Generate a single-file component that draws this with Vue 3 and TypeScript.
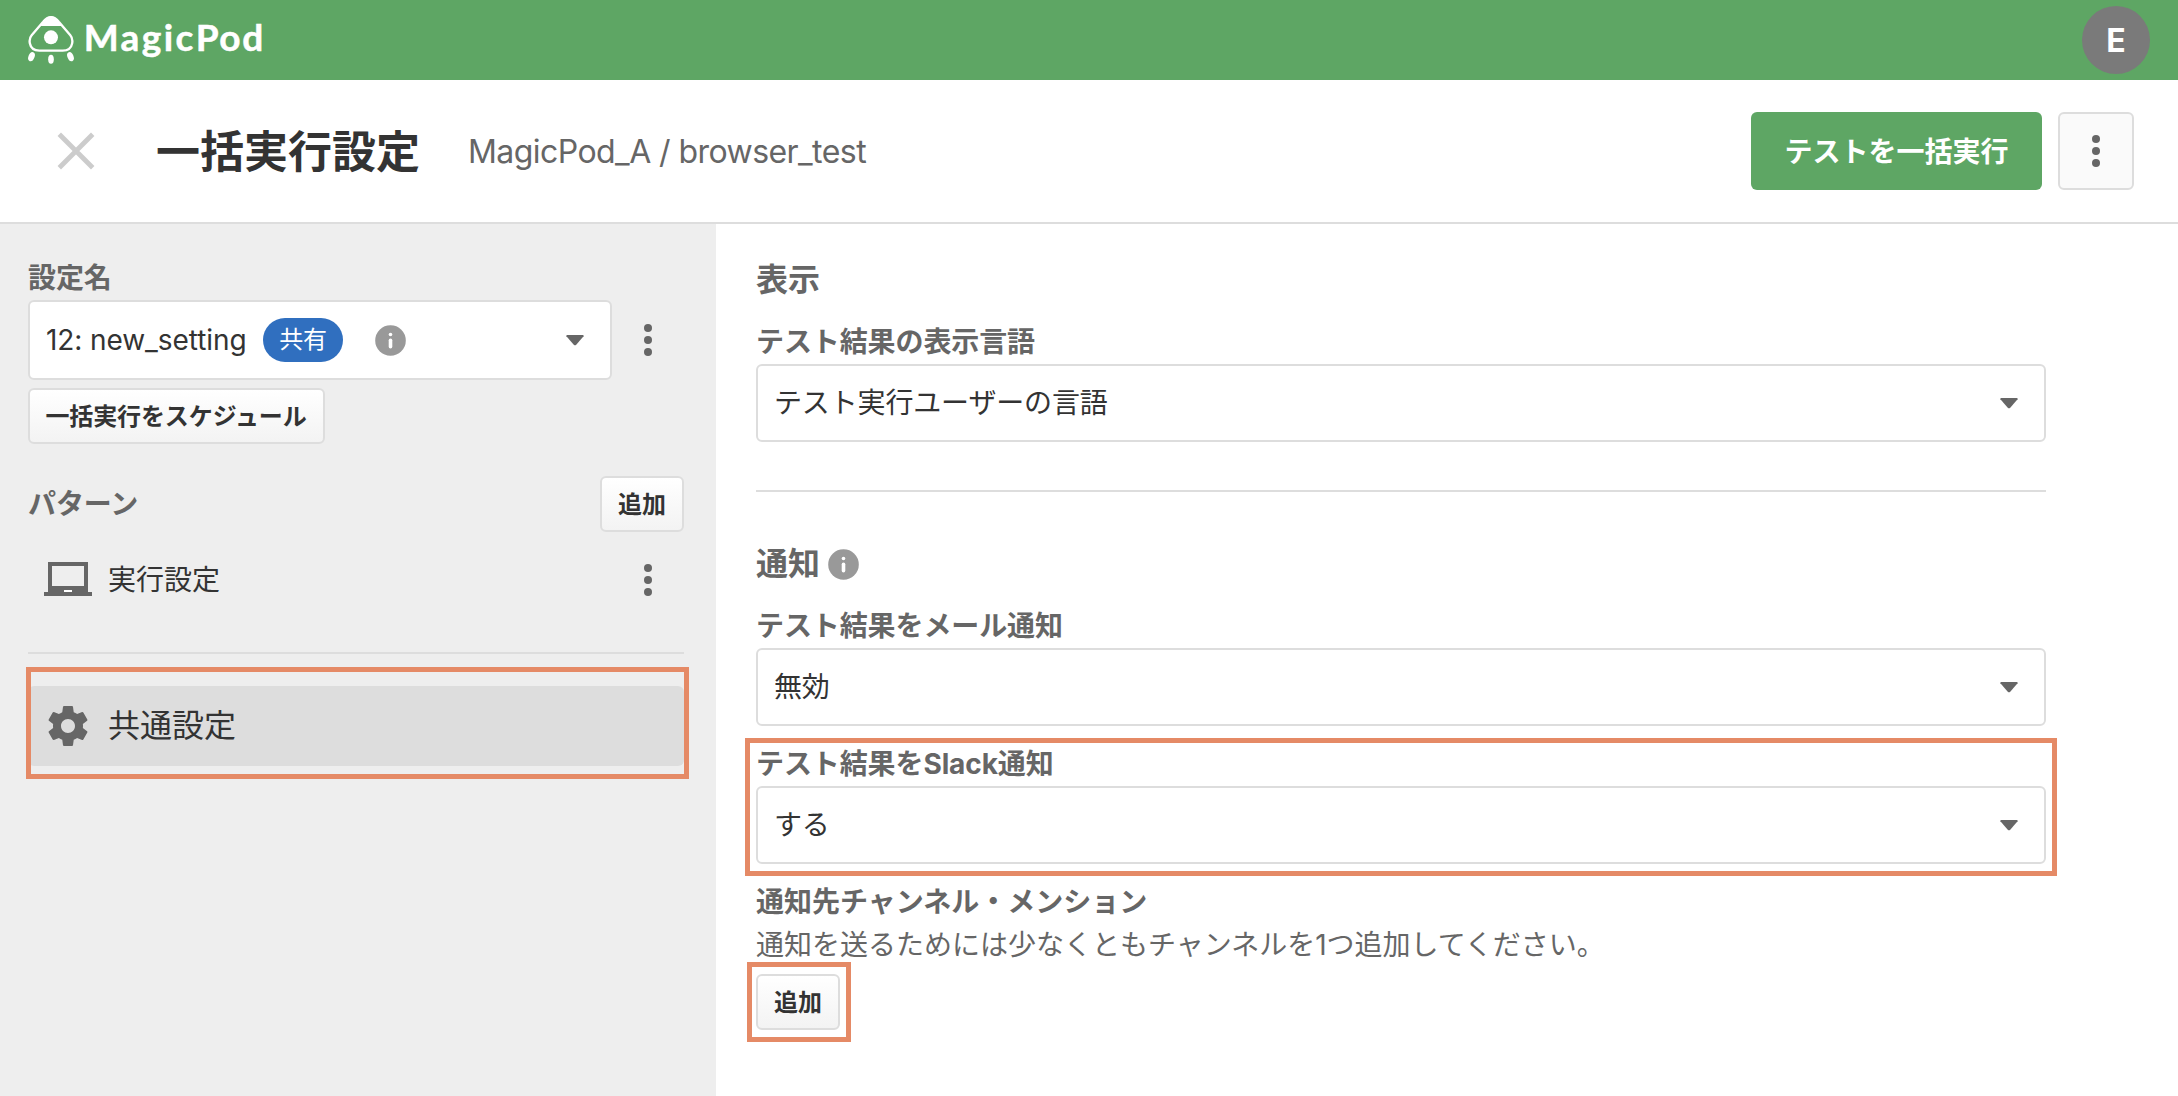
<script setup lang="ts">
import { ref } from 'vue'

interface SelectField {
  id: string
  label: string
  value: string
}

const language = ref<SelectField>({ id: 'language', label: 'テスト結果の表示言語', value: 'テスト実行ユーザーの言語' })
const notifications = ref<SelectField[]>([
  { id: 'mail', label: 'テスト結果をメール通知', value: '無効' },
  { id: 'slack', label: 'テスト結果をSlack通知', value: 'する' },
])
</script>

<template>
  <div class="page">
    <header class="topbar">
      <div class="brand">
        <svg class="logo" viewBox="84 45 140 150">
          <path
            d="M153 51.5C143 51.5 136 57 129 66L95 106C88 114 88 122 89.500 130C92 144 103 151.500 118 152H188C203 151.500 214 144 216.500 130C218 122 218 114 211 106L177 66C170 57 163 51.500 153 51.500Z"
            fill="none" stroke="#fff" stroke-width="7" />
          <path d="M122 78C134 62 140 49 153 49C166 49 173 62 186 78Z" fill="#fff" />
          <circle cx="153" cy="112" r="21" fill="#fff" />
          <ellipse cx="94.500" cy="170" rx="9" ry="14.500" transform="rotate(22 94.500 170)" fill="#fff" />
          <ellipse cx="153" cy="177.500" rx="8.500" ry="13.500" fill="#fff" />
          <ellipse cx="211.500" cy="170" rx="9" ry="14.500" transform="rotate(-22 211.500 170)" fill="#fff" />
        </svg>
        <div class="wordmark"><span class="magic">Magic</span><span>Pod</span></div>
      </div>
      <div class="avatar">E</div>
    </header>

    <div class="titlebar">
      <svg class="close" viewBox="0 0 40 40">
        <path d="M3.300 3.300L36.700 36.700M36.700 3.300L3.300 36.700" stroke="#ccc" stroke-width="4.800" />
      </svg>
      <h1>一括実行設定</h1>
      <div class="crumb">MagicPod_A / browser_test</div>
      <button class="run">テストを一括実行</button>
      <button class="more"><span class="dots"><i /><i /><i /></span></button>
    </div>

    <div class="body">
      <aside class="side">
        <div class="label">設定名</div>
        <div class="setting-row">
          <div class="select setting">
            <span class="setting-name">12: new_setting</span>
            <span class="badge">共有</span>
            <svg class="info" viewBox="0 0 31 31">
              <circle cx="15.500" cy="15.500" r="15.300" />
              <circle cx="15.500" cy="9.500" r="1.800" fill="#fff" />
              <rect x="13.700" y="13.500" width="3.600" height="10" rx="1.800" fill="#fff" />
            </svg>
            <svg class="caret" viewBox="0 0 18 11"><path d="M1 0H17Q18 .3 17.600 1.200L10 9.900Q9 10.800 8 9.900L.4 1.200Q0 .3 1 0Z" /></svg>
          </div>
          <span class="dots"><i /><i /><i /></span>
        </div>
        <button class="btn schedule">一括実行をスケジュール</button>

        <div class="pattern-head">
          <div class="label">パターン</div>
          <button class="btn">追加</button>
        </div>
        <div class="item pattern">
          <svg class="item-icon" viewBox="0 0 24 24"><path d="M22 18V3H2v15H0v2h24v-2h-2zm-8 0h-4v-1h4v1zm6-3H4V5h16v10z" /><path d="M10 17h4v1h-4z" class="slot" /></svg>
          <span>実行設定</span>
          <span class="dots"><i /><i /><i /></span>
        </div>
        <div class="rule" />
        <div class="item common">
          <svg class="item-icon" viewBox="0 0 24 24"><path d="M19.430 12.980c.04-.32.07-.64.07-.98s-.03-.66-.07-.98l2.110-1.650c.19-.15.24-.42.12-.64l-2-3.460c-.12-.22-.39-.3-.61-.22l-2.490 1c-.52-.4-1.080-.73-1.690-.98l-.38-2.650C14.460 2.180 14.250 2 14 2h-4c-.25 0-.46.18-.49.42l-.38 2.650c-.61.25-1.170.59-1.690.98l-2.490-1c-.23-.09-.49 0-.61.22l-2 3.460c-.13.22-.07.49.12.64l2.110 1.650c-.04.32-.07.65-.07.98s.03.66.07.98l-2.110 1.650c-.19.15-.24.42-.12.64l2 3.460c.12.22.39.3.61.22l2.490-1c.52.4 1.080.73 1.690.98l.38 2.650c.03.24.24.42.49.42h4c.25 0 .46-.18.49-.42l.38-2.650c.61-.25 1.170-.59 1.690-.98l2.490 1c.23.09.49 0 .61-.22l2-3.460c.12-.22.07-.49-.12-.64l-2.110-1.650zM12 15.500c-1.930 0-3.500-1.570-3.500-3.500s1.570-3.500 3.500-3.500 3.500 1.570 3.500 3.500-1.570 3.500-3.500 3.500z" /></svg>
          <span>共通設定</span>
          <div class="mark mark-common" />
        </div>
      </aside>

      <main class="main">
        <h2>表示</h2>
        <div class="field">
          <div class="label">{{ language.label }}</div>
          <div class="select">
            <span>{{ language.value }}</span>
            <svg class="caret" viewBox="0 0 18 11"><path d="M1 0H17Q18 .3 17.600 1.200L10 9.900Q9 10.800 8 9.900L.4 1.200Q0 .3 1 0Z" /></svg>
          </div>
        </div>
        <div class="rule" />
        <h2 class="notice">
          通知
          <svg class="info" viewBox="0 0 31 31">
            <circle cx="15.500" cy="15.500" r="15.300" />
            <circle cx="15.500" cy="9.500" r="1.800" fill="#fff" />
            <rect x="13.700" y="13.500" width="3.600" height="10" rx="1.800" fill="#fff" />
          </svg>
        </h2>
        <div v-for="f in notifications" :key="f.id" class="field">
          <div class="label">{{ f.label }}</div>
          <div class="select">
            <span>{{ f.value }}</span>
            <svg class="caret" viewBox="0 0 18 11"><path d="M1 0H17Q18 .3 17.600 1.200L10 9.900Q9 10.800 8 9.900L.4 1.200Q0 .3 1 0Z" /></svg>
          </div>
          <div v-if="f.id === 'slack'" class="mark mark-slack" />
        </div>
        <div class="label channel">通知先チャンネル・メンション</div>
        <p>通知を送るためには少なくともチャンネルを1つ追加してください。</p>
        <div class="add">
          <button class="btn">追加</button>
          <div class="mark mark-add" />
        </div>
      </main>
    </div>
  </div>
</template>

<style>
body {
  margin: 0;
  overflow: hidden;
}
</style>

<style scoped>
.page,
.page * {
  box-sizing: border-box;
}

.page {
  display: flex;
  flex-direction: column;
  width: 2178px;
  height: 1096px;
  background: #fff;
  color: #333;
  font: 400 28px/40px Inter, "Noto Sans CJK JP", sans-serif;
  white-space: nowrap;
}

button {
  font-family: inherit;
  padding: 0;
  white-space: nowrap;
}

svg {
  display: block;
  flex: none;
}

.topbar {
  flex: none;
  height: 80px;
  padding: 0 28px;
  background: #5ea664;
  display: flex;
  align-items: center;
  justify-content: space-between;
}

.brand {
  display: flex;
  height: 80px;
}

.logo {
  width: 46.670px;
  height: 50px;
  margin-top: 15px;
}

.wordmark {
  display: flex;
  margin: 14px 0 0 9px;
  font: 700 37px/46px Lato, sans-serif;
  color: #fff;
  letter-spacing: 1.600px;
  -webkit-text-stroke: .5px #fff;
}

.magic {
  letter-spacing: 2.400px;
}

.avatar {
  width: 68px;
  height: 68px;
  border-radius: 50%;
  background: #7a7a7a;
  color: #fff;
  font-weight: 700;
  font-size: 32px;
  line-height: 69px;
  text-align: center;
}

.titlebar {
  flex: none;
  height: 144px;
  border-bottom: 2px solid #ddd;
  padding: 0 44px 0 56px;
  display: flex;
  align-items: center;
}

.close {
  width: 40px;
  height: 40px;
}

h1 {
  margin: 2px 0 0 60px;
  font-size: 44px;
  line-height: 60px;
  font-weight: 700;
}

.crumb {
  margin: 2px 0 0 48px;
  font-size: 32px;
  letter-spacing: -.560px;
  color: #666;
}

.run {
  width: 291px;
  height: 78px;
  margin-left: auto;
  padding-bottom: 2px;
  border: 0;
  border-radius: 6px;
  background: #5ea664;
  color: #fff;
  font-size: 28px;
  font-weight: 700;
}

.more {
  width: 76px;
  height: 78px;
  margin-left: 16px;
  border: 2px solid #ddd;
  border-radius: 6px;
  background: #fafafa;
  display: flex;
  align-items: center;
  justify-content: center;
}

.dots {
  display: flex;
  flex-direction: column;
  gap: 4px;
}

.dots i {
  width: 8px;
  height: 8px;
  border-radius: 50%;
  background: #666;
}

.body {
  flex: 1;
  display: flex;
}

.side {
  width: 716px;
  padding: 33px 32px 0 28px;
  background: #eee;
}

.label {
  height: 40px;
  line-height: 42px;
  font-weight: 700;
  letter-spacing: -.1px;
  color: #666;
}

.setting-row {
  display: flex;
  align-items: center;
  margin-top: 3px;
}

.setting-row .dots {
  margin-left: 32px;
}

.select {
  display: flex;
  align-items: center;
  width: 1290px;
  height: 78px;
  padding: 0 26px 0 16px;
  border: 2px solid #ddd;
  border-radius: 6px;
  background: #fff;
  letter-spacing: -.15px;
}

.caret {
  width: 18px;
  height: 11px;
  margin-left: auto;
  fill: #666;
}

.setting {
  width: 584px;
  height: 80px;
}

.setting-name {
  width: 217px;
  letter-spacing: -.08px;
}

.badge {
  width: 80px;
  height: 44px;
  border-radius: 22px;
  background: #306fbf;
  color: #fff;
  font-size: 24px;
  line-height: 44px;
  text-align: center;
}

.info {
  width: 31px;
  height: 31px;
  margin-left: 32px;
  fill: #999;
}

.btn {
  display: block;
  width: 84px;
  height: 56px;
  padding-bottom: 4px;
  border: 2px solid #ddd;
  border-radius: 6px;
  background: linear-gradient(#fff, #f3f3f3);
  color: #333;
  font-size: 24px;
  font-weight: 700;
}

.schedule {
  width: 297px;
  margin-top: 8px;
  padding-right: 1px;
  letter-spacing: -.1px;
}

.pattern-head {
  display: flex;
  align-items: center;
  justify-content: space-between;
  margin-top: 32px;
}

.pattern-head .label {
  line-height: 40px;
}

.item {
  position: relative;
  display: flex;
  align-items: center;
  height: 80px;
  padding-left: 16px;
  border-radius: 6px;
}

.item-icon {
  width: 48px;
  height: 48px;
  margin-right: 16px;
  fill: #666;
}

.slot {
  fill: #fff;
}

.pattern {
  margin-top: 8px;
}

.pattern .dots {
  margin: 0 32px 0 auto;
}

.rule {
  height: 2px;
  background: #ddd;
}

.side .rule {
  margin: 32px 0;
}

.common {
  background: #ddd;
  font-size: 32px;
}

.mark {
  position: absolute;
  border: 5px solid #e58a66;
}

.mark-common {
  left: -2px;
  top: -19px;
  width: 663px;
  height: 112px;
}

.main {
  padding: 32px 0 0 40px;
}

h2 {
  margin: 0;
  height: 48px;
  font-size: 32px;
  line-height: 48px;
  font-weight: 700;
  color: #666;
}

.field {
  position: relative;
  margin-bottom: 17px;
}

h2 + .field {
  margin-top: 17px;
}

.field .select {
  margin-top: 3px;
}

.main .rule {
  width: 1290px;
  margin: 48px 0;
}

.notice {
  display: flex;
  align-items: center;
}

.notice .info {
  margin-left: 8px;
}

.mark-slack {
  left: -11px;
  top: -5px;
  width: 1312px;
  height: 138px;
}

.channel {
  letter-spacing: 0;
}

p {
  margin: 4px 0 9px;
  color: #666;
}

.add {
  position: relative;
  width: 84px;
}

.mark-add {
  left: -9px;
  top: -12px;
  width: 104px;
  height: 80px;
}
</style>
